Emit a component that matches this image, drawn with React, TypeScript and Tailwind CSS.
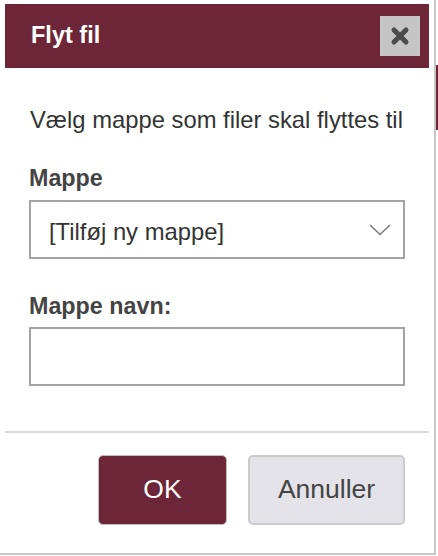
import React from "react";

function CloseIcon() {
  return (
    <svg width="20" height="20" viewBox="0 0 20 20" fill="none">
      <path d="M4 4 L16 16 M16 4 L4 16" stroke="#4b4b4b" strokeWidth="5" strokeLinecap="round" />
    </svg>
  );
}

function Chevron() {
  return (
    <svg width="22" height="12" viewBox="0 0 22 12" fill="none">
      <path d="M1 1 L11 10.5 L21 1" stroke="#7a7a7a" strokeWidth="1.6" />
    </svg>
  );
}

export default function App() {
  return (
    <div
      className="relative w-[438px] h-[556px] bg-white overflow-hidden"
      style={{ fontFamily: '"Liberation Sans", Arial, sans-serif' }}
    >
      {/* page content peeking out behind the dialog */}
      <div className="absolute right-0 top-[65px] w-[2px] h-[65px] bg-[#6d2638]"></div>

      <div className="w-[436px] h-[555px] border-r-2 border-b-2 border-[#c9c9c9] pt-[4px] pl-[5px] pr-[5px] flex flex-col">
        {/* Header */}
        <div className="h-[64px] bg-[#6d2638] flex items-center justify-between pl-[26px] pr-[9px]">
          <h1 className="text-[23.5px] font-bold text-white">Flyt fil</h1>
          <button className="w-[40px] h-[40px] bg-[#c5c5c5] flex items-center justify-center">
            <CloseIcon />
          </button>
        </div>

        {/* Body */}
        <div className="px-[24px] pt-[40px] flex flex-col">
          <p className="text-[23.8px] leading-[24px] text-[#333] pl-[1px] whitespace-nowrap">Vælg mappe som filer skal flyttes til</p>

          <label className="mt-[34px] mb-[10px] text-[23.3px] leading-[24px] font-bold text-[#444]">Mappe</label>
          <div className="h-[59px] border-2 border-[#a3a3a3] flex items-center justify-between pl-[18px] pr-[12px]">
            <span className="text-[23.8px] text-[#333] pt-[5px]">[Tilføj ny mappe]</span>
            <Chevron />
          </div>

          <label className="mt-[35px] mb-[9px] text-[23.3px] leading-[24px] font-bold text-[#444]">Mappe navn:</label>
          <div className="h-[59px] border-2 border-[#a3a3a3]"></div>
        </div>

        <div className="mt-[45px] h-[2px] bg-[#dadada]"></div>

        {/* Footer */}
        <div className="flex justify-end gap-[21px] pt-[22px] pr-[24px]">
          <button className="w-[129px] h-[70px] rounded-[5px] bg-[#6d2638] border border-[#bdbdbd] text-white text-[26.5px]">OK</button>
          <button className="w-[157px] h-[70px] rounded-[5px] bg-[#e4e3e9] border-2 border-[#cbcbcb] text-[#444] text-[26.5px]">Annuller</button>
        </div>
      </div>
    </div>
  );
}
